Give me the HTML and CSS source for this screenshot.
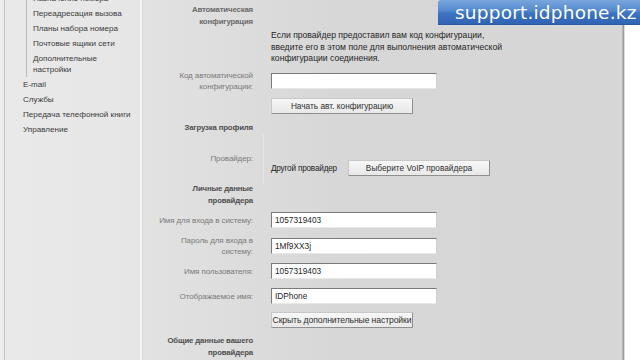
FILE: index.html
```html
<!DOCTYPE html>
<html lang="ru">
<head>
<meta charset="utf-8">
<title>Настройки провайдера</title>
<link rel="stylesheet" href="styles.css">
</head>
<body>
<div class="page">
  <nav class="sidebar">
    <ul class="submenu">
      <li>Назначение номера</li>
      <li>Переадресация вызова</li>
      <li>Планы набора номера</li>
      <li>Почтовые ящики сети</li>
      <li>Дополнительные<br>настройки</li>
    </ul>
    <ul class="menu">
      <li>E-mail</li>
      <li>Службы</li>
      <li>Передача телефонной книги</li>
      <li>Управление</li>
    </ul>
  </nav>
  <div class="split"></div>
  <main class="main">
    <div class="form">
      <div class="row r1">
        <div class="label head light">Автоматическая<br>конфигурация</div>
        <div class="field"></div>
      </div>
      <div class="row r2">
        <div class="label"></div>
        <div class="field desc">Если провайдер предоставил вам код конфигурации,<br>введите его в этом поле для выполнения автоматической<br>конфигурации соединения.</div>
      </div>
      <div class="row r3">
        <div class="label">Код автоматической<br>конфигурации:</div>
        <div class="field"><input class="input" type="text" value=""></div>
      </div>
      <div class="row r4">
        <div class="label"></div>
        <div class="field"><button class="btn">Начать авт. конфигурацию</button></div>
      </div>
      <div class="row r5">
        <div class="label head">Загрузка профиля</div>
        <div class="field"></div>
      </div>
      <div class="row r6">
        <div class="label">Провайдер:</div>
        <div class="field lined"><span class="value">Другой провайдер</span><button class="btn">Выберите VoIP провайдера</button></div>
      </div>
      <div class="row r7">
        <div class="label head">Личные данные<br>провайдера</div>
        <div class="field"></div>
      </div>
      <div class="row r8">
        <div class="label">Имя для входа в систему:</div>
        <div class="field"><input class="input" type="text" value="1057319403"></div>
      </div>
      <div class="row r9">
        <div class="label">Пароль для входа в<br>систему:</div>
        <div class="field"><input class="input" type="text" value="1Mf9XX3j"></div>
      </div>
      <div class="row r10">
        <div class="label">Имя пользователя:</div>
        <div class="field"><input class="input" type="text" value="1057319403"></div>
      </div>
      <div class="row r11">
        <div class="label">Отображаемое имя:</div>
        <div class="field"><input class="input" type="text" value="IDPhone"></div>
      </div>
      <div class="row r12">
        <div class="label"></div>
        <div class="field"><button class="btn tight">Скрыть дополнительные настройки</button></div>
      </div>
      <div class="row r13">
        <div class="label head">Общие данные вашего<br>провайдера</div>
        <div class="field"></div>
      </div>
    </div>
  </main>
  <div class="edge"></div>
</div>
<div class="banner">support.idphone.kz</div>
</body>
</html>
```
FILE: styles.css
```css
* { box-sizing: border-box; }
html, body { margin: 0; padding: 0; }
body {
  width: 640px;
  height: 360px;
  overflow: hidden;
  font-family: "Liberation Sans", Arial, sans-serif;
  font-size: 8.6px;
  color: #333;
  background: #fff;
  position: relative;
}
.page {
  display: flex;
  height: 360px;
}
.sidebar {
  width: 140px;
  flex: none;
  background: linear-gradient(to right, #ececec 0, #ececec 4px, #c4c4c4 4px, #c4c4c4 5px, #e9e9e9 5px, #e6e6e6 100%);
  padding-left: 23px;
  white-space: nowrap;
  font-size: 8.1px;
}
.sidebar ul { list-style: none; margin: 0; padding: 0; }
.sidebar li { padding: 2px 0; line-height: 11px; color: #3a3a3a; }
.submenu {
  margin-top: -9px !important;
  margin-left: 3px !important;
  border-left: 1px solid #b9b9b9;
  padding-left: 6px !important;
}
.split {
  width: 3px;
  flex: none;
  background: linear-gradient(to right, #f4f4f4, #f4f4f4 2px, #d8d8d8 2px);
}
.main {
  flex: 1;
  background: linear-gradient(to right, #e2e2e2, #d7d7d7 40%, #d6d6d6);
}
.edge {
  width: 18px;
  flex: none;
  background: linear-gradient(to right, #cfcfcf 0, #9c9c9c 1px, #9c9c9c 2px, #bdbdbd 2px, #ffffff 3px);
}
.form {
  display: flex;
  flex-direction: column;
  padding-top: 4px;
}
.row {
  display: grid;
  grid-template-columns: 110px 1fr;
  column-gap: 10px;
  align-items: center;
}
.label {
  text-align: right;
  color: #7b7b7b;
  font-size: 8px;
  letter-spacing: -0.1px;
  line-height: 11px;
  white-space: nowrap;
}
.label.head {
  color: #4e4e4e;
  font-weight: bold;
  font-size: 7.8px;
  letter-spacing: -0.15px;
  line-height: 12px;
}
.label.head.light { color: #6a6a6a; }
.field {
  padding-left: 7px;
  border-left: 1px solid transparent;
  display: flex;
  align-items: center;
}
.field.lined { border-left-color: #e6e6e6; align-self: stretch; padding-top: 26px; padding-bottom: 7px; }
.desc {
  display: block;
  color: #262626;
  line-height: 11.5px;
  white-space: nowrap;
}
.value {
  color: #1f1f1f;
  font-size: 8.2px;
  letter-spacing: -0.2px;
  width: 77px;
  flex: none;
  white-space: nowrap;
}
.input {
  width: 166px;
  height: 16px;
  margin: 0;
  padding: 0 3px;
  font: inherit;
  font-size: 8.3px;
  color: #1e1e1e;
  background: #fff;
  border: 1px solid;
  border-color: #7a7a7a #cfcfcf #e8e8e8 #7a7a7a;
  outline: none;
}
.btn {
  width: 142px;
  height: 16px;
  margin: 0;
  padding: 0;
  font: inherit;
  font-size: 8.3px;
  color: #2e2e2e;
  white-space: nowrap;
  overflow: hidden;
  background: linear-gradient(#f7f7f7, #e8e8e8);
  border: 1px solid;
  border-color: #c8c8c8 #8f8f8f #8f8f8f #c8c8c8;
  border-radius: 1px;
}
.btn.tight { font-size: 8.6px; letter-spacing: -0.1px; }
.r2 { margin-top: 2px; }
.r3 { margin-top: 5.5px; }
.r4 { margin-top: 6px; }
.r5 { margin-top: 8px; }
.r6 { margin-top: 0; }
.r7 { margin-top: 0; }
.r8 { margin-top: 5px; }
.r9 { margin-top: 7px; }
.r10 { margin-top: 6px; }
.r11 { margin-top: 9px; }
.r12 { margin-top: 8px; }
.r13 { margin-top: 7px; }
.banner {
  position: absolute;
  top: 0;
  left: 438px;
  width: 202px;
  height: 25px;
  padding-left: 17px;
  font-family: "DejaVu Sans", sans-serif;
  font-size: 18.5px;
  line-height: 25px;
  letter-spacing: 0.2px;
  color: #fff;
  white-space: nowrap;
  overflow: hidden;
  background: linear-gradient(#7aa6dd 0, #5389cf 45%, #3c73c2 55%, #2f64b3 100%);
  border-bottom: 1px solid #2a5aa0;
  border-top-left-radius: 3px;
}
```
